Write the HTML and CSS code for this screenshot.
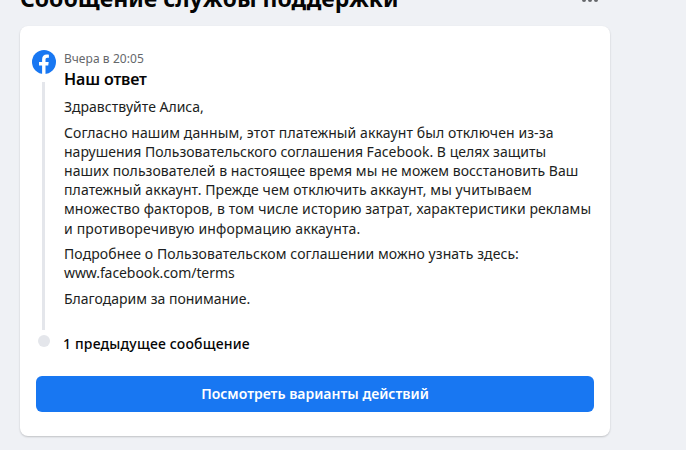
FILE: index.html
```html
<!DOCTYPE html>
<html lang="ru">
<head>
<meta charset="utf-8">
<title>Сообщение службы поддержки</title>
<link rel="stylesheet" href="styles.css">
</head>
<body>
<main class="page">
  <header class="header">
    <h1 class="title">Сообщение службы поддержки</h1>
    <div class="more"><i></i><i></i><i></i></div>
  </header>
  <section class="card">
    <article class="message">
      <div class="rail">
        <svg class="logo" viewBox="0 0 24 24"><circle cx="12" cy="12" r="12" fill="#1877f2"/><path fill="#fff" d="M10.1 23.9v-8.4H7V12h3.1V9.4c0-3.1 1.8-4.8 4.6-4.8 1.3 0 2.2.2 2.2.2v3h-1.4c-1.5 0-2 .9-2 1.9V12h3.2l-.5 3.5h-2.7v8.4z"/></svg>
        <div class="line"></div>
      </div>
      <div class="content">
        <div class="date">Вчера в 20:05</div>
        <h2 class="subject">Наш ответ</h2>
        <div class="text">
          <p>Здравствуйте Алиса,</p>
          <p><span class="loose">Согласно нашим данным, этот платежный аккаунт был отключен из-за</span><br>
          <span class="slight">нарушения Пользовательского соглашения Facebook. В целях защиты</span><br>
          <span class="medium">наших пользователей в настоящее время мы не можем восстановить Ваш</span><br>
          <span class="loose">платежный аккаунт. Прежде чем отключить аккаунт, мы учитываем</span><br>
          <span class="loose">множество факторов, в том числе историю затрат, характеристики рекламы</span><br>
          <span class="wide">и противоречивую информацию аккаунта.</span></p>
          <p><span class="loose">Подробнее о Пользовательском соглашении можно узнать здесь:</span><br>
          <span class="tight">www.facebook.com/terms</span></p>
          <p>Благодарим за понимание.</p>
        </div>
      </div>
    </article>
    <div class="previous"><span class="dot"></span><span class="previous-label">1 предыдущее сообщение</span></div>
    <button class="action"><span>Посмотреть варианты действий</span></button>
  </section>
</main>
</body>
</html>
```
FILE: styles.css
```css
* { box-sizing: border-box; }
body {
  margin: 0;
  height: 450px;
  overflow: hidden;
  background: #eff1f5;
  color: #1c1e21;
  font-family: "Noto Sans", "Open Sans", sans-serif;
}
.page { width: 590px; margin-left: 20px; }
.header {
  display: flex;
  justify-content: space-between;
  height: 26px;
}
.title {
  margin: -18px 0 0;
  font-size: 23px;
  line-height: 32px;
  font-weight: 700;
  color: #050505;
  white-space: nowrap;
}
.more { display: flex; gap: 2px; margin: -2px 12px 0 0; }
.more i { width: 4px; height: 4px; border-radius: 50%; background: #65676b; }
.card {
  height: 410px;
  padding: 24px 16px 0 12px;
  background: #fff;
  border-radius: 8px;
  box-shadow: 0 1px 2px rgba(0, 0, 0, .2);
}
.message { display: flex; gap: 8px; height: 280px; }
.rail {
  display: flex;
  flex-direction: column;
  align-items: center;
  width: 24px;
}
.logo { width: 24px; height: 24px; flex: none; }
.line { flex: 1; width: 3px; margin: 8px 1px 0 0; background: #e4e6eb; }
.content { white-space: nowrap; }
.date { padding-top: 1px; font-size: 12px; line-height: 16px; letter-spacing: .08px; color: #65676b; }
.subject {
  margin: 2px 0 0;
  font-size: 16px;
  line-height: 20px;
  font-weight: 600;
  letter-spacing: -.15px;
  color: #050505;
}
.text { margin-top: 8px; font-size: 14px; line-height: 19.2px; }
.text p { margin: 0 0 6.4px; }
.tight { letter-spacing: -.08px; }
.slight { letter-spacing: .01px; }
.medium { letter-spacing: .055px; }
.loose { letter-spacing: .095px; }
.wide { letter-spacing: .16px; }
.previous {
  display: flex;
  align-items: center;
  gap: 13px;
  height: 20px;
  margin: 3px 0 0 6px;
}
.dot { width: 12px; height: 12px; margin-top: -5px; border-radius: 50%; background: #e4e6eb; }
.previous-label { font-size: 14px; font-weight: 500; letter-spacing: .18px; color: #050505; }
.action {
  display: block;
  width: 558px;
  height: 36px;
  margin: 23px 0 0 4px;
  padding: 0;
  border: 0;
  border-radius: 6px;
  background: #1877f2;
  color: #fff;
  font: 600 14px/36px "Noto Sans", sans-serif;
}
```
